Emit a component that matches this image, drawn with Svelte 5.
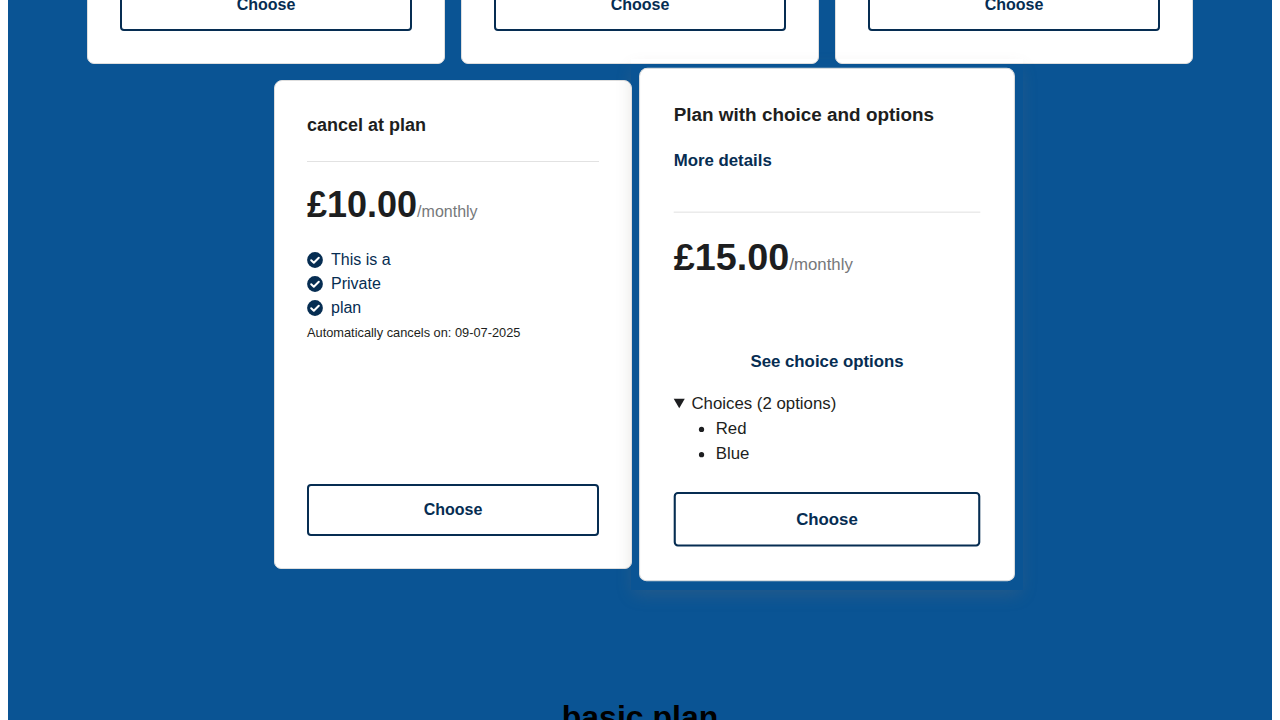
<script>
  const features = ['This is a', 'Private', 'plan'];
  const choices = ['Red', 'Blue'];
</script>

<main>
  <section class="plans">
    {#each [1, 2, 3] as id (id)}
      <div class="cell upper">
        <article class="card"><button>Choose</button></article>
      </div>
    {/each}
    <div class="cell">
      <article class="card">
        <h3>cancel at plan</h3>
        <hr />
        <p class="price"><strong>£10.00</strong><span>/monthly</span></p>
        <ul class="features">
          {#each features as feature}
            <li>
              <svg viewBox="0 0 16 16" width="16" height="16" aria-hidden="true"><circle cx="8" cy="8" r="7.9" fill="currentColor" /><path d="M4.2 8.3 6.8 10.8 11.8 5.8" fill="none" stroke="#fff" stroke-width="2" stroke-linecap="round" stroke-linejoin="round" /></svg>
              {feature}
            </li>
          {/each}
        </ul>
        <small>Automatically cancels on: 09-07-2025</small>
        <button>Choose</button>
      </article>
    </div>
    <div class="cell raised">
      <article class="card">
        <h3>Plan with choice and options</h3>
        <a class="more" href="#details">More details</a>
        <hr />
        <p class="price"><strong>£15.00</strong><span>/monthly</span></p>
        <a class="see" href="#choices">See choice options</a>
        <details open>
          <summary>Choices (2 options)</summary>
          <ul>
            {#each choices as choice}<li>{choice}</li>{/each}
          </ul>
        </details>
        <button>Choose</button>
      </article>
    </div>
  </section>
  <h1>basic plan</h1>
</main>

<style>
  :global(body) { margin: 0; overflow: hidden; background: #fff; }
  main {
    height: 720px;
    margin: 0 8px;
    overflow: hidden;
    background: #0a5494;
    font: 16px/24px "Liberation Sans", Arial, sans-serif;
    color: #1d1e20;
  }
  .plans {
    display: flex;
    flex-wrap: wrap;
    justify-content: center;
    width: 1122px;
    margin: 0 auto;
  }
  .cell { box-sizing: border-box; width: 374px; height: 505px; padding: 8px; }
  .upper { margin-top: -433px; }
  .raised {
    transform: scale(1.05);
    box-shadow: 0 7px 16px -2px rgba(130, 115, 110, 0.24);
  }
  .card {
    box-sizing: border-box;
    display: flex;
    flex-direction: column;
    height: 489px;
    padding: 32px;
    border: 1px solid #dedede;
    border-radius: 8px 8px 7px 7px;
    background: #fff;
  }
  h3 { margin: 0; font-size: 18px; line-height: 24px; }
  hr { width: 100%; margin: 24px 0 25px; border: 0; border-top: 1px solid #e2e2e2; }
  .price { margin: 0; line-height: 36px; }
  .price strong { font-size: 36px; }
  .price span { color: #76787a; }
  ul { margin: 0; }
  .features { margin-top: 18px; padding: 0; list-style: none; color: #062d52; }
  .features li { display: flex; align-items: center; gap: 8px; }
  .features svg { flex: none; }
  small { font-size: 12.8px; line-height: 24px; margin-top: 1px; }
  button {
    width: 100%;
    height: 52px;
    flex: none;
    margin: auto 0 0;
    padding: 0;
    border: 2px solid #062d52;
    border-radius: 4px;
    background: #fff;
    color: #062d52;
    font: bold 16px/24px "Liberation Sans", Arial, sans-serif;
  }
  a { color: #062d52; font-weight: bold; text-decoration: none; }
  .more { margin-top: 20px; }
  .raised hr { margin: 36px 0 25px; }
  .see { margin-top: 62px; text-align: center; }
  details { margin-top: 16px; }
  details ul { padding-left: 40px; }
  h1 { margin: 122px 0 0; font-size: 32px; line-height: 37px; text-align: center; color: #000; }
</style>
